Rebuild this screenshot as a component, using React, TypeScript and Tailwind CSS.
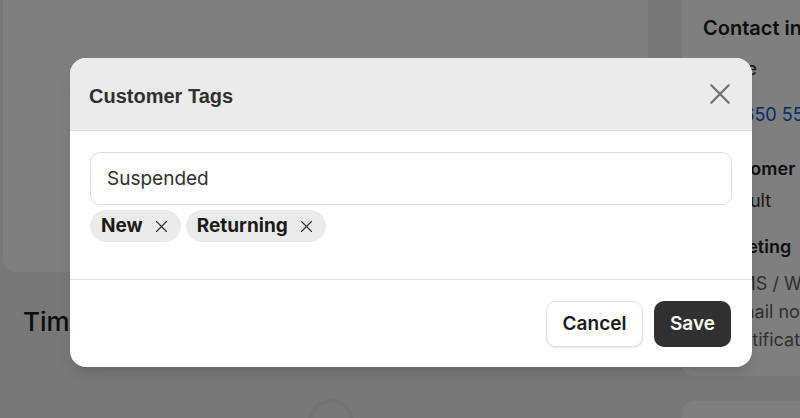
import { useState } from 'react'

function CloseIcon({ className }: { className?: string }) {
  return (
    <svg viewBox="0 0 24 24" fill="none" stroke="currentColor" strokeLinecap="round" className={className}>
      <path d="M4 4l16 16M20 4L4 20" />
    </svg>
  )
}

function TagChip({ label, onRemove }: { label: string; onRemove: () => void }) {
  return (
    <span className="flex h-[32px] items-center gap-[11px] rounded-full bg-[#ebebeb] pl-[11px] pr-[12px] text-[19px] font-bold text-[#1a1a1a]">
      {label}
      <button type="button" onClick={onRemove} className="text-[#303030]">
        <CloseIcon className="h-[15px] w-[15px] stroke-[1.8]" />
      </button>
    </span>
  )
}

// customer page sitting behind the dialog
function CustomerPage() {
  return (
    <div className="-mt-[60px] flex gap-[34px] pl-[3px]">
      <div className="w-[645px] shrink-0">
        <div className="h-[332px] rounded-xl bg-white" />
        <h2 className="mt-[30px] pl-[20px] text-[26px] font-medium text-[#1a1a1a]">Timeline</h2>
        <div className="mt-[58px] flex justify-center pl-[10px]">
          <div className="h-[46px] w-[46px] rounded-full border-[4px] border-[#e6e6e6]" />
        </div>
      </div>
      <div className="w-[300px] shrink-0">
        <div className="rounded-xl bg-white px-[21px] pb-[22px] pt-[74px] text-[18px] text-[#303030]">
          <h3 className="text-[20px] font-semibold leading-[28px] text-[#1a1a1a]">Contact information</h3>
          <p className="mt-[14px] leading-[26px]">Phone</p>
          <p className="mt-[20px] leading-[26px] text-[#005bd3]">+44 650 555 0142</p>
          <h4 className="mt-[28px] pl-[7px] font-semibold leading-[26px] text-[#1a1a1a]">Customer</h4>
          <p className="mt-[6px] pl-[7px] leading-[26px]">Default</p>
          <h4 className="mt-[20px] font-semibold leading-[26px] text-[#1a1a1a]">Marketing</h4>
          <ul className="mt-[10px] text-[#616161]">
            {['SMS / WhatsApp', 'Email not subscribed', 'Notifications off'].map((line) => (
              <li key={line} className="flex items-center gap-[9px] leading-[28px]">
                <span className="h-[16px] w-[16px] rounded-full border-2 border-[#8a8a8a]" />
                {line}
              </li>
            ))}
          </ul>
        </div>
        <div className="mt-[25px] h-[120px] rounded-xl bg-white" />
      </div>
    </div>
  )
}

export default function App() {
  const [tags, setTags] = useState(['New', 'Returning'])
  const [value, setValue] = useState('Suspended')

  return (
    <div className="relative h-[418px] w-[800px] overflow-hidden bg-[#f1f1f1] font-['Inter',sans-serif]">
      <CustomerPage />

      <div className="absolute inset-0 bg-black/50" />

      <div className="absolute left-[70px] top-[58px] w-[682px] overflow-hidden rounded-[16px] bg-white shadow-lg">
        <div className="flex h-[73px] items-center justify-between border-b border-[#e3e3e3] bg-[#ebebeb] pl-[19px] pr-[19px] pt-[3px]">
          <h2 className="font-['Liberation_Sans',Arial,sans-serif] text-[20px] font-bold text-[#303030]">
            Customer Tags
          </h2>
          <button type="button" className="-mt-[3px] text-[#6f6f6f]">
            <CloseIcon className="h-[26px] w-[26px] stroke-[2]" />
          </button>
        </div>

        <div className="border-b border-[#e3e3e3] px-[20px] pb-[37px] pt-[21px]">
          <input
            value={value}
            onChange={(e) => setValue(e.target.value)}
            className="h-[53px] w-full rounded-[10px] border border-[#dcdcdc] px-[16px] text-[19px] text-[#303030] outline-none"
          />
          <div className="mt-[5px] flex gap-[5px]">
            {tags.map((tag) => (
              <TagChip key={tag} label={tag} onRemove={() => setTags(tags.filter((t) => t !== tag))} />
            ))}
          </div>
        </div>

        <div className="flex justify-end gap-[11px] px-[21px] pb-[20px] pt-[21px]">
          <button
            type="button"
            className="h-[46px] w-[97px] rounded-[10px] border border-[#e3e3e3] bg-white text-[19px] font-semibold text-[#1a1a1a] shadow-[0_1px_2px_rgba(0,0,0,0.12)]"
          >
            Cancel
          </button>
          <button
            type="button"
            className="h-[46px] w-[77px] rounded-[10px] bg-[#303030] text-[19px] font-semibold text-white"
          >
            Save
          </button>
        </div>
      </div>
    </div>
  )
}
